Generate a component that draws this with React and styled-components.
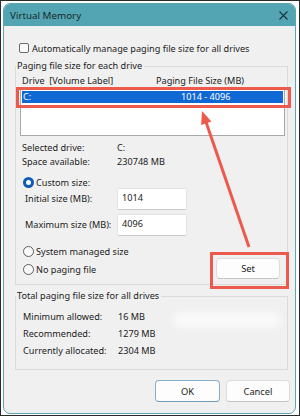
import React from 'react';
import styled, { createGlobalStyle } from 'styled-components';

const GlobalStyle = createGlobalStyle`
  html, body {
    margin: 0;
    padding: 0;
    background: #fff;
  }
  body {
    font-family: "Noto Sans", "Open Sans", sans-serif;
    font-size: 9.15px;
    color: #1b1b1b;
  }
  * {
    box-sizing: border-box;
  }
`;

const Page = styled.div`
  position: relative;
  width: 300px;
  height: 416px;
  border: 1px solid #2b2b2b;
  padding: 2px 0 0 2px;
  background: #fff;
  overflow: hidden;
`;

const Window = styled.div`
  width: 293px;
  height: 411px;
  border: 1px solid #5aa6b4;
  border-radius: 7px;
  background: #f0f0f0;
  overflow: hidden;
  display: flex;
  flex-direction: column;
`;

const TitleBar = styled.div`
  height: 22px;
  flex-shrink: 0;
  background: #53a5b3;
  display: flex;
  align-items: center;
  justify-content: space-between;
  padding: 0 7px 0 6px;
  font-size: 9.8px;
  color: #16292d;
`;

const Body = styled.div`
  display: flex;
  flex-direction: column;
  padding: 0 7px 0 11px;
`;

const CheckRow = styled.label`
  display: flex;
  align-items: center;
  gap: 3px;
  height: 12px;
  margin: 16px 0 0 4px;
`;

const CheckBox = styled.span`
  width: 10px;
  height: 10px;
  border: 1px solid #6a6a6a;
  border-radius: 2px;
  background: #fbfbfb;
`;

const Group = styled.fieldset`
  margin: ${(p) => p.$top}px 0 0;
  padding: 0;
  border: 1px solid #dadada;
  min-width: 0;
`;

const Legend = styled.legend`
  margin-left: 0;
  padding: 0 2px 0 1px;
  line-height: 12px;
`;

const DriveInner = styled.div`
  padding: 0 2px 0 4px;
  display: flex;
  flex-direction: column;
`;

const HeaderRow = styled.div`
  display: grid;
  grid-template-columns: 134px 1fr;
  line-height: 12px;
  margin-top: 3px;
  padding-left: 2px;
`;

const ListBox = styled.div`
  height: 48px;
  margin-top: 1px;
  background: #fff;
  border: 1px solid #a9a9a9;
  padding: 2px 1px;
`;

const ListRow = styled.div`
  display: grid;
  grid-template-columns: 158px 1fr;
  height: 12px;
  line-height: 12px;
  padding-left: 1px;
  background: ${(p) => (p.$selected ? '#0f68d4' : 'transparent')};
  color: ${(p) => (p.$selected ? '#fff' : 'inherit')};
`;

const InfoGrid = styled.div`
  display: grid;
  grid-template-columns: ${(p) => p.$label}px 1fr;
  line-height: ${(p) => p.$line}px;
  margin-top: ${(p) => p.$top}px;
  padding-left: ${(p) => p.$left}px;
`;

const RadioRow = styled.label`
  display: flex;
  align-items: center;
  gap: 2px;
  height: ${(p) => p.$h || 12}px;
  margin-top: ${(p) => p.$top}px;
  padding-left: 3px;
`;

const Radio = styled.span`
  width: 11px;
  height: 11px;
  border-radius: 50%;
  display: flex;
  align-items: center;
  justify-content: center;
  border: ${(p) => (p.$checked ? 'none' : '1px solid #5e5e5e')};
  background: ${(p) => (p.$checked ? '#0d5db8' : '#f9f9f9')};

  &::after {
    content: '';
    display: ${(p) => (p.$checked ? 'block' : 'none')};
    width: 5px;
    height: 5px;
    border-radius: 50%;
    background: #fff;
  }
`;

const SizeGrid = styled.div`
  display: grid;
  grid-template-columns: 97px 65px;
  row-gap: 4px;
  align-items: center;
  padding-left: 5px;
`;

const SizeLabel = styled.span`
  line-height: 12px;
`;

const SizeInput = styled.div`
  height: 22px;
  background: #fff;
  border: 1px solid #e4e4e4;
  border-bottom-color: #c9c9c9;
  border-radius: 2px;
  padding: 3px 4px 0;
  line-height: 12px;
  margin-left: -5px;
`;

const BottomArea = styled.div`
  display: flex;
  justify-content: space-between;
  align-items: flex-start;
  padding-bottom: 5px;
`;

const RadioColumn = styled.div`
  display: flex;
  flex-direction: column;
`;

const Button = styled.button`
  font-family: inherit;
  font-size: 9.3px;
  color: #1b1b1b;
  width: ${(p) => p.$w}px;
  height: ${(p) => p.$h}px;
  background: #fdfdfd;
  border: 1px solid ${(p) => (p.$primary ? '#86afcb' : '#dcdcdc')};
  border-bottom-color: ${(p) => (p.$primary ? '#6f9dbd' : '#c4c4c4')};
  border-radius: 4px;
  padding: 0;
  margin: ${(p) => p.$margin || 0};
`;

const TotalInner = styled.div`
  padding: 6px 0 10px 7px;
`;

const Footer = styled.div`
  display: flex;
  justify-content: flex-end;
  gap: 6px;
  margin: 10px -2px 0 0;
`;

const Overlay = styled.svg`
  position: absolute;
  left: 0;
  top: 0;
  pointer-events: none;
`;

const Smudge = styled.div`
  position: absolute;
  left: 172px;
  top: 312px;
  width: 108px;
  height: 14px;
  border-radius: 7px;
  background: rgba(255, 255, 255, 0.75);
  filter: blur(4px);
`;

const CloseIcon = () => (
  <svg width="9" height="9" viewBox="0 0 9 9">
    <path d="M0.5 0.5 L8.5 8.5 M8.5 0.5 L0.5 8.5" stroke="#1b3338" strokeWidth="1.1" />
  </svg>
);

const App = () => {
  return (
    <Page>
      <GlobalStyle />
      <Window>
        <TitleBar>
          <span>Virtual Memory</span>
          <CloseIcon />
        </TitleBar>
        <Body>
          <CheckRow>
            <CheckBox />
            <span>Automatically manage paging file size for all drives</span>
          </CheckRow>

          <Group $top={6}>
            <Legend>Paging file size for each drive</Legend>
            <DriveInner>
              <HeaderRow>
                <span>Drive&nbsp; [Volume Label]</span>
                <span>Paging File Size (MB)</span>
              </HeaderRow>
              <ListBox>
                <ListRow $selected>
                  <span>C:</span>
                  <span>1014 - 4096</span>
                </ListRow>
              </ListBox>

              <InfoGrid $label={95} $line={14} $top={5} $left={2}>
                <span>Selected drive:</span>
                <span>C:</span>
                <span>Space available:</span>
                <span>230748 MB</span>
              </InfoGrid>

              <RadioRow $top={8} $h={11}>
                <Radio $checked />
                <span>Custom size:</span>
              </RadioRow>

              <SizeGrid>
                <SizeLabel>Initial size (MB):</SizeLabel>
                <SizeInput>1014</SizeInput>
                <SizeLabel>Maximum size (MB):</SizeLabel>
                <SizeInput>4096</SizeInput>
              </SizeGrid>

              <BottomArea>
                <RadioColumn>
                  <RadioRow $top={9}>
                    <Radio />
                    <span>System managed size</span>
                  </RadioRow>
                  <RadioRow $top={6}>
                    <Radio />
                    <span>No paging file</span>
                  </RadioRow>
                </RadioColumn>
                <Button $w={64} $h={21} $margin="22px 5px 0 0">Set</Button>
              </BottomArea>
            </DriveInner>
          </Group>

          <Group $top={5}>
            <Legend>Total paging file size for all drives</Legend>
            <TotalInner>
              <InfoGrid $label={95} $line={17} $top={0} $left={0}>
                <span>Minimum allowed:</span>
                <span>16 MB</span>
                <span>Recommended:</span>
                <span>1279 MB</span>
                <span>Currently allocated:</span>
                <span>2304 MB</span>
              </InfoGrid>
            </TotalInner>
          </Group>

          <Footer>
            <Button $primary $w={65} $h={22}>OK</Button>
            <Button $w={64} $h={22}>Cancel</Button>
          </Footer>
        </Body>
      </Window>

      <Smudge />
      <Overlay width="300" height="416" viewBox="0 0 300 416">
        <rect x="16.5" y="87.5" width="272" height="18" fill="none" stroke="#ec5a4e" strokeWidth="3" />
        <rect x="210.5" y="252.5" width="76" height="34" fill="none" stroke="#ec5a4e" strokeWidth="3" />
        <line x1="248" y1="246" x2="205" y2="121" stroke="#ec5a4e" strokeWidth="3" />
        <polygon points="201,110 210.4,120.5 200.1,124.1" fill="#ec5a4e" />
      </Overlay>
    </Page>
  );
};

export default App;
